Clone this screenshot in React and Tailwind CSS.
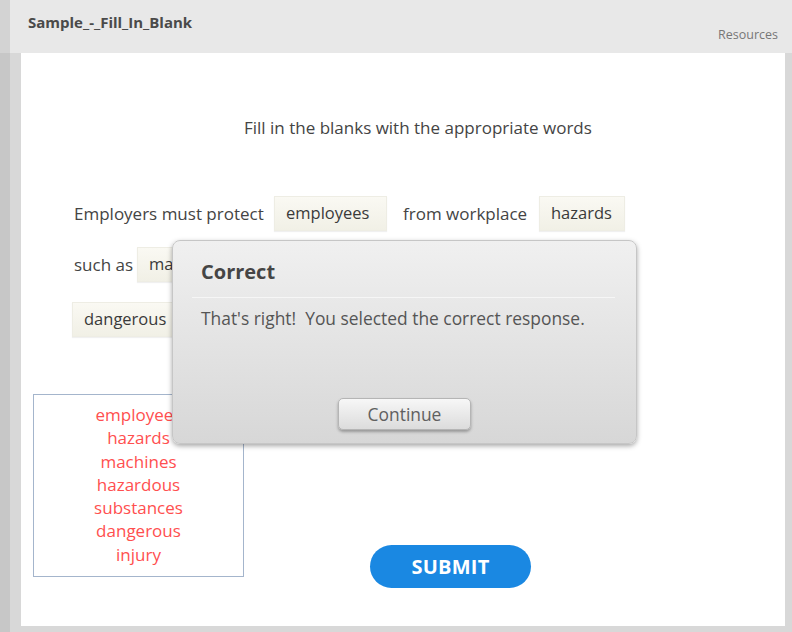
import React from "react";

const font = { fontFamily: '"Open Sans", "Liberation Sans", sans-serif' };

function Blank({ children, className = "" }) {
  return (
    <div
      className={
        "h-[35px] flex items-center pl-[11px] text-[16.5px] text-[#3a3a3a] bg-gradient-to-b from-[#faf9f3] to-[#f1f0e6] border border-[#eeede4] shadow-[0_1px_1px_rgba(0,0,0,0.06)] " +
        className
      }
    >
      {children}
    </div>
  );
}

export default function App() {
  const words = ["employees", "hazards", "machines", "hazardous", "substances", "dangerous", "injury"];
  return (
    <div className="w-[792px] h-[632px] flex bg-[#d8d8d8] overflow-hidden" style={font}>
      <div className="w-[10px] flex flex-col">
        <div className="h-[53px] bg-[#d3d3d3]" />
        <div className="flex-1 bg-[#c7c7c7]" />
      </div>
      <div className="flex-1 flex flex-col">
        <div className="h-[53px] bg-[#e8e8e8] flex justify-between pl-[18px] pr-[14px]">
          <div className="pt-[12px] text-[15px] leading-[20px] font-bold text-[#4a4a4a]">
            Sample_-_Fill_In_Blank
          </div>
          <div className="pt-[26px] text-[12.5px] leading-[18px] text-[#777]">Resources</div>
        </div>
        <div className="flex-1 pl-[11px] pr-[7px] pb-[6px]">
          <div className="relative w-full h-full bg-white flex flex-col">
            <div className="pt-[63px] pl-[223px] text-[17px] leading-[23px] text-[#444]">
              Fill in the blanks with the appropriate words
            </div>

            <div className="mt-[57px] pl-[53px] h-[35px] flex items-center text-[17px] text-[#444]">
              <span className="w-[200px] shrink-0">Employers must protect</span>
              <Blank className="w-[113px] shrink-0">employees</Blank>
              <span className="ml-[16px] w-[136px] shrink-0">from workplace</span>
              <Blank className="w-[86px] shrink-0">hazards</Blank>
            </div>

            <div className="mt-[16px] pl-[53px] h-[35px] flex items-center text-[17px] text-[#444]">
              <span className="w-[63px] shrink-0">such as</span>
              <Blank className="w-[110px] shrink-0">machines</Blank>
            </div>

            <div className="mt-[20px] pl-[51px] h-[35px] flex items-center text-[17px] text-[#444]">
              <Blank className="w-[112px]">dangerous</Blank>
            </div>

            <div className="mt-[57px] pl-[12px] flex items-start">
              <div className="w-[211px] h-[183px] border border-[#a4b5cc] pt-[8px] flex flex-col items-center">
                {words.map((w) => (
                  <div key={w} className="text-[17px] leading-[23.3px] text-[#ff4f4f]">
                    {w}
                  </div>
                ))}
              </div>
              <button className="mt-[151px] ml-[126px] w-[161px] h-[43px] rounded-full bg-[#1a88e2] text-white font-bold text-[20px] tracking-[0.2px]">
                SUBMIT
              </button>
            </div>

            <div className="absolute left-[151px] top-[187px] w-[465px] h-[204px] rounded-[8px] border border-[#c6c6c6] bg-gradient-to-b from-[#f0f0f0] to-[#d7d7d7] shadow-[0_2px_5px_rgba(0,0,0,0.35)] flex flex-col">
              <div className="pt-[17px] pl-[28px] text-[20px] leading-[28px] font-bold text-[#454545]">
                Correct
              </div>
              <div className="mt-[11px] ml-[19px] mr-[21px] h-[1px] bg-[#d2d2d2] border-b border-[#f6f6f6]" />
              <div className="mt-[8px] pl-[28px] text-[17.4px] leading-[24px] text-[#555]">
                That's right!&nbsp; You selected the correct response.
              </div>
              <button className="mt-auto mb-[13px] self-center w-[133px] h-[32px] rounded-[5px] border border-[#b5b5b5] bg-gradient-to-b from-[#f7f7f7] to-[#dcdcdc] shadow-[0_2px_3px_rgba(0,0,0,0.3)] text-[17.4px] leading-[24px] text-[#606060]">
                Continue
              </button>
            </div>
          </div>
        </div>
      </div>
    </div>
  );
}
